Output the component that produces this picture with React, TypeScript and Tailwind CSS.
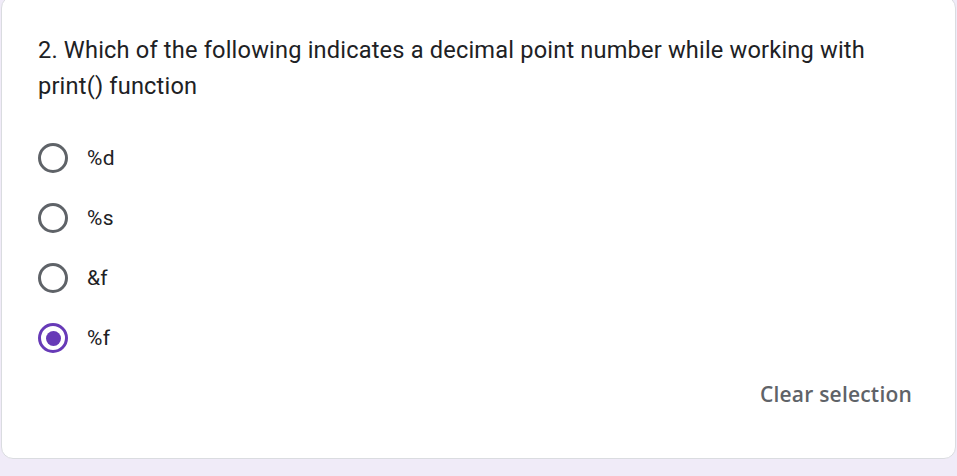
import React from "react";

const options = ["%d", "%s", "&f", "%f"];

export default function App() {
  return (
    <div className="h-[476px] w-[957px] overflow-hidden bg-[#f0ebf8]" style={{ fontFamily: "Roboto, Arial, sans-serif" }}>
      <div className="ml-[1px] mt-[-4px] w-[955px] rounded-[12px] border border-[#dadce0] bg-white pl-[36px] pr-[43px] pt-[35px] pb-[45px]">
        <div className="text-[23.6px] leading-[36px] tracking-[0.18px] text-[#202124]">
          2. Which of the following indicates a decimal point number while working with print() function
        </div>
        <div className="mt-[24px] flex flex-col">
          {options.map((o, i) => {
            const sel = i === 3;
            return (
              <div key={o} className="flex h-[60px] items-center">
                <div
                  className={
                    sel
                      ? "flex h-[30px] w-[30px] items-center justify-center rounded-full border-[3px] border-[#673ab7]"
                      : "flex h-[30px] w-[30px] items-center justify-center rounded-full border-[3px] border-[#5f6368]"
                  }
                >
                  {sel && <div className="h-[15px] w-[15px] rounded-full bg-[#673ab7]" />}
                </div>
                <span className="ml-[19px] text-[21px] leading-[30px] tracking-[0.3px] text-[#202124]">{o}</span>
              </div>
            );
          })}
        </div>
        <div className="mt-[9px] flex h-[36px] items-center justify-end">
          <span className="text-[21px] font-semibold tracking-[0.2px] text-[#5f6368]" style={{ fontFamily: '"Open Sans", sans-serif' }}>
            Clear selection
          </span>
        </div>
      </div>
    </div>
  );
}
